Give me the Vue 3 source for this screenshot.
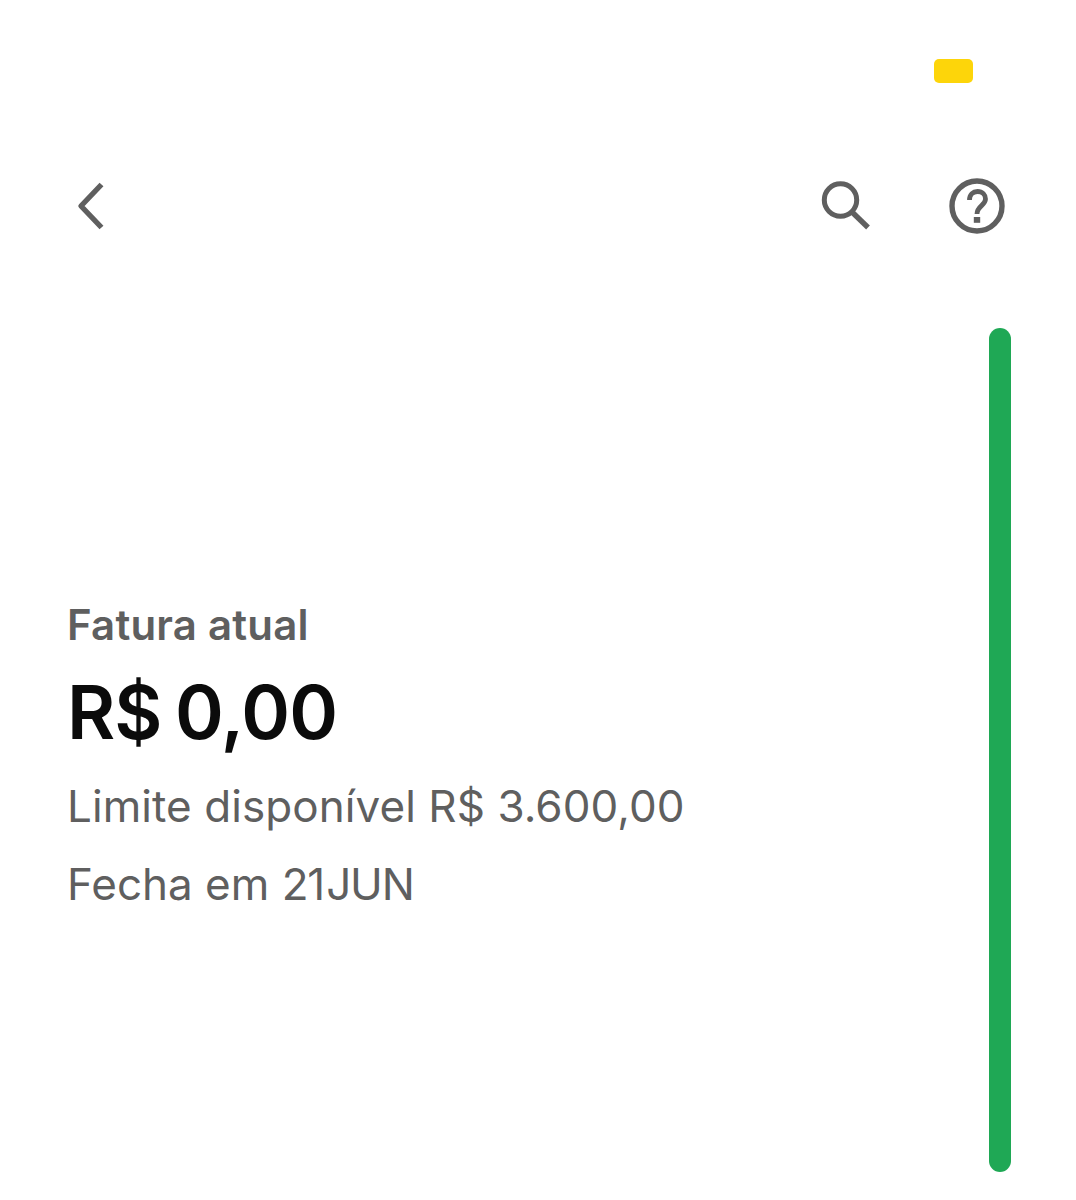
<template>
  <div class="screen">
    <!-- Status bar -->
    <div class="status-bar">
      <span class="status-chip"></span>
    </div>

    <!-- Toolbar -->
    <header class="toolbar">
      <button class="icon-btn" aria-label="Voltar">
        <svg width="32" height="50" viewBox="0 0 32 50" fill="none" stroke="#5f5f5f" stroke-width="5.4" stroke-linejoin="round">
          <path d="M27.5 3.5 L7 25 L27.5 46.5" />
        </svg>
      </button>
      <div class="toolbar-actions">
        <button class="icon-btn" aria-label="Buscar">
          <svg width="50" height="50" viewBox="0 0 50 50" fill="none" stroke="#5f5f5f" stroke-width="5">
            <circle cx="19.5" cy="19" r="16.2" />
            <path d="M31 31 L47 46.5" stroke-width="5.4" />
          </svg>
        </button>
        <button class="icon-btn" aria-label="Ajuda">
          <svg width="56" height="56" viewBox="0 0 56 56" fill="none" stroke="#5f5f5f" stroke-width="5.4">
            <circle cx="28" cy="28" r="25" />
            <path d="M20.5 22 C20.5 16.5 24 13.5 28.5 13.5 C33.5 13.5 36.5 17 36.5 21 C36.5 27.5 28 28 28 36" stroke-width="4.8" />
            <rect x="24.8" y="39" width="6.4" height="5.8" fill="#5f5f5f" stroke="none" />
          </svg>
        </button>
      </div>
    </header>

    <!-- Invoice card -->
    <main class="card">
      <section class="summary">
        <h2 class="summary-title">Fatura atual</h2>
        <p class="summary-amount">R$ 0,00</p>
        <p class="summary-line limit">Limite disponível R$ 3.600,00</p>
        <p class="summary-line">Fecha em <span class="date">21 JUN</span></p>
      </section>
      <div class="status-stripe"></div>
    </main>
  </div>
</template>

<script setup>
</script>

<style>
html,
body {
  background: #ffffff;
}
</style>

<style scoped>
.screen {
  width: 1076px;
  height: 1200px;
  overflow: hidden;
  background: #ffffff;
  font-family: Inter, "Liberation Sans", sans-serif;
  box-sizing: border-box;
  padding-top: 59px;
}

.status-bar {
  display: flex;
  justify-content: flex-end;
  padding-right: 103px;
  height: 24px;
}
.status-chip {
  width: 39px;
  height: 24px;
  background: #fdd50a;
  border-radius: 5px;
}

.toolbar {
  display: flex;
  justify-content: space-between;
  align-items: center;
  margin-top: 95px;
  height: 56px;
  padding: 0 71px 0 74px;
}
.toolbar-actions {
  display: flex;
  align-items: center;
  gap: 78px;
}
.icon-btn {
  display: flex;
  padding: 0;
  background: none;
  border: none;
}

.card {
  display: flex;
  justify-content: space-between;
  margin-top: 94px;
  height: 844px;
  padding: 0 65px 0 67px;
}

.summary {
  padding-top: 269px;
}
.summary-title {
  margin: 0;
  font-size: 42px;
  line-height: 56px;
  font-weight: 600;
  letter-spacing: 0.2px;
  color: #5f5f5f;
}
.summary-amount {
  margin: 14px 0 0;
  font-size: 74px;
  line-height: 90px;
  font-weight: 600;
  letter-spacing: -1px;
  word-spacing: -4px;
  color: #0b0b0b;
}
.summary-line {
  margin: 0;
  font-size: 44px;
  line-height: 78px;
  font-weight: 400;
  color: #5f5f5f;
}
.limit {
  margin-top: 10px;
  letter-spacing: 0.07px;
}
.date {
  word-spacing: -9px;
  letter-spacing: -1.2px;
}

.status-stripe {
  width: 22px;
  height: 844px;
  background: #1fa855;
  border-radius: 11px;
}
</style>
